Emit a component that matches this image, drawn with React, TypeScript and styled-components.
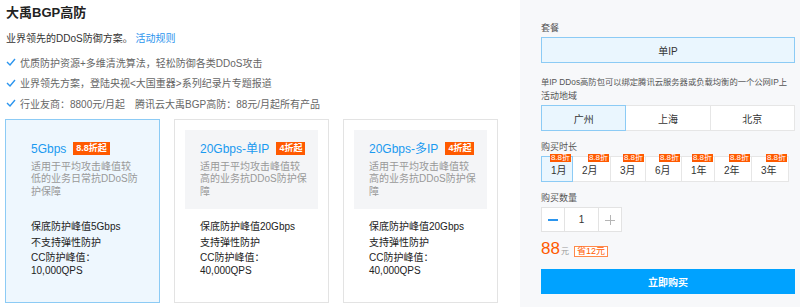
import React, { useState } from 'react';
import styled, { createGlobalStyle } from 'styled-components';

const GlobalStyle = createGlobalStyle`
  body {
    margin: 0;
    font-family: "Liberation Sans", "Noto Sans CJK SC", sans-serif;
    color: #333;
    background: #fff;
  }
  * { box-sizing: border-box; }
`;

interface Plan {
  title: string;
  tag: string;
  desc: string;
  features: string[];
  cc: string;
}

const plans: Plan[] = [
  {
    title: '5Gbps',
    tag: '8.8折起',
    desc: '适用于平均攻击峰值较低的业务日常抗DDoS防护保障',
    features: ['保底防护峰值5Gbps', '不支持弹性防护'],
    cc: '10,000QPS',
  },
  {
    title: '20Gbps-单IP',
    tag: '4折起',
    desc: '适用于平均攻击峰值较高的业务抗DDoS防护保障',
    features: ['保底防护峰值20Gbps', '支持弹性防护'],
    cc: '40,000QPS',
  },
  {
    title: '20Gbps-多IP',
    tag: '4折起',
    desc: '适用于平均攻击峰值较高的业务抗DDoS防护保障',
    features: ['保底防护峰值20Gbps', '支持弹性防护'],
    cc: '40,000QPS',
  },
];

const bullets = [
  '优质防护资源+多维清洗算法，轻松防御各类DDoS攻击',
  '业界领先方案，登陆央视<大国重器>系列纪录片专题报道',
  '行业友商：8800元/月起　腾讯云大禹BGP高防：88元/月起所有产品',
];

const regions = ['广州', '上海', '北京'];
const durations = [
  { label: '1月', width: 32 },
  { label: '2月', width: 39 },
  { label: '3月', width: 36 },
  { label: '6月', width: 37 },
  { label: '1年', width: 34 },
  { label: '2年', width: 38 },
  { label: '3年', width: 38 },
];

function CheckIcon() {
  return (
    <svg width="10" height="8" viewBox="0 0 10 8">
      <polyline points="1,4 4,7 9,1" fill="none" stroke="#2b95ee" strokeWidth="1.4" />
    </svg>
  );
}

function App(): JSX.Element {
  const [plan, setPlan] = useState(0);
  const [region, setRegion] = useState(0);
  const [duration, setDuration] = useState(0);
  const [count, setCount] = useState(1);

  return (
    <Page>
      <GlobalStyle />
      <Main>
        <Title>大禹BGP高防</Title>
        <Subtitle>
          业界领先的DDoS防御方案。 <RuleLink>活动规则</RuleLink>
        </Subtitle>
        <BulletList>
          {bullets.map((b) => (
            <Bullet key={b}>
              <CheckIcon />
              <span>{b}</span>
            </Bullet>
          ))}
        </BulletList>
        <CardRow>
          {plans.map((p, i) => (
            <Card key={p.title} $active={plan === i} onClick={() => setPlan(i)}>
              <CardHead $active={plan === i}>
                <CardTitle>
                  {p.title}
                  <Tag>{p.tag}</Tag>
                </CardTitle>
                <CardDesc>{p.desc}</CardDesc>
              </CardHead>
              <Features>
                {p.features.map((f) => (
                  <Feature key={f}>{f}</Feature>
                ))}
                <CcBlock>
                  CC防护峰值：
                  <br />
                  {p.cc}
                </CcBlock>
              </Features>
            </Card>
          ))}
        </CardRow>
      </Main>

      <Side>
        <Label>套餐</Label>
        <WideOption $active>单IP</WideOption>
        <SideNote>单IP DDos高防包可以绑定腾讯云服务器或负载均衡的一个公网IP上</SideNote>
        <Label $gap={1}>活动地域</Label>
        <OptionRow>
          {regions.map((r, i) => (
            <RegionOption key={r} $active={region === i} onClick={() => setRegion(i)}>
              {r}
            </RegionOption>
          ))}
        </OptionRow>
        <Label $gap={9}>购买时长</Label>
        <DurationRow>
          {durations.map((d, i) => (
            <DurationOption
              key={d.label}
              $active={duration === i}
              style={{ width: d.width }}
              onClick={() => setDuration(i)}
            >
              {d.label}
              <MiniTag>8.8折</MiniTag>
            </DurationOption>
          ))}
        </DurationRow>
        <Label $gap={9}>购买数量</Label>
        <Stepper>
          <StepButton aria-label="减少" onClick={() => setCount(Math.max(1, count - 1))}>
            <MinusBar />
          </StepButton>
          <StepValue>{count}</StepValue>
          <StepButton aria-label="增加" onClick={() => setCount(count + 1)}>
            <PlusMark />
          </StepButton>
        </Stepper>
        <PriceRow>
          <Price>88</Price>
          <Unit>元</Unit>
          <Saving>省12元</Saving>
        </PriceRow>
        <BuyButton>立即购买</BuyButton>
      </Side>
    </Page>
  );
}

export default App;

const Page = styled.div`
  display: flex;
  width: 800px;
  height: 307px;
  overflow: hidden;
`;

const Main = styled.main`
  width: 520px;
  padding: 3px 0 0 6px;
`;

const Title = styled.h1`
  margin: 0;
  font-size: 13px;
  line-height: 20px;
  font-weight: 700;
  color: #222;
`;

const Subtitle = styled.p`
  margin: 7px 0 0;
  font-size: 10px;
  line-height: 18px;
  color: #333;
`;

const RuleLink = styled.a`
  color: #2b95ee;
  cursor: pointer;
`;

const BulletList = styled.ul`
  list-style: none;
  margin: 4px 0 0;
  padding: 0;
`;

const Bullet = styled.li`
  display: flex;
  align-items: center;
  gap: 4px;
  height: 20.5px;
  font-size: 10px;
  color: #666;
`;

const CardRow = styled.div`
  display: flex;
  gap: 14px;
  margin: 5px 0 0 -1px;
`;

const Card = styled.div<{ $active: boolean }>`
  width: 155px;
  height: 184px;
  padding: 10px;
  border: 1px solid ${(p) => (p.$active ? '#8ccbf5' : '#e3e3e3')};
  background: ${(p) => (p.$active ? '#eef7fe' : '#fff')};
  cursor: pointer;
`;

const CardHead = styled.div<{ $active: boolean }>`
  height: 79px;
  padding: 11px 10px 0 15px;
  background: ${(p) => (p.$active ? 'transparent' : '#f4f5f7')};
`;

const CardTitle = styled.div`
  display: flex;
  align-items: center;
  gap: 7px;
  font-size: 12px;
  line-height: 16px;
  color: #1a9af0;
  white-space: nowrap;
`;

const Tag = styled.span`
  display: inline-block;
  padding: 0 3px;
  height: 13px;
  line-height: 13px;
  font-size: 9px;
  font-weight: 700;
  color: #fff;
  background: #ff5a00;
`;

const CardDesc = styled.p`
  margin: 4px 0 0;
  font-size: 10px;
  line-height: 12.7px;
  color: #999;
`;

const Features = styled.div`
  padding: 10px 0 0 15px;
  font-size: 10px;
  color: #222;
`;

const Feature = styled.div`
  line-height: 16px;
`;

const CcBlock = styled.div`
  line-height: 13px;
`;

const Side = styled.aside`
  width: 280px;
  padding: 21px 5px 0 21px;
  background: #f7f8fa;
`;

const Label = styled.div<{ $gap?: number }>`
  margin-top: ${(p) => p.$gap ?? 0}px;
  margin-bottom: 2px;
  font-size: 9px;
  line-height: 14px;
  color: #555;
`;

const optionBase = `
  display: flex;
  align-items: center;
  height: 26px;
  font-size: 10px;
  color: #333;
  cursor: pointer;
`;

const WideOption = styled.div<{ $active: boolean }>`
  ${optionBase}
  justify-content: center;
  border: 1px solid #8ccbf5;
  background: #eaf6fe;
`;

const SideNote = styled.p`
  margin: 13px 0 0;
  font-size: 8.3px;
  line-height: 12px;
  color: #555;
  white-space: nowrap;
`;

const OptionRow = styled.div`
  display: flex;
`;

const RegionOption = styled.div<{ $active: boolean }>`
  ${optionBase}
  flex: 1;
  justify-content: center;
  position: relative;
  border: 1px solid ${(p) => (p.$active ? '#8ccbf5' : '#e6e6e6')};
  background: ${(p) => (p.$active ? '#eaf6fe' : '#fff')};
  z-index: ${(p) => (p.$active ? 1 : 0)};
  & + & {
    margin-left: -1px;
  }
`;

const DurationRow = styled.div`
  display: flex;
  margin-top: 1px;
`;

const DurationOption = styled.div<{ $active: boolean }>`
  ${optionBase}
  position: relative;
  padding-left: 9px;
  border: 1px solid ${(p) => (p.$active ? '#8ccbf5' : '#e6e6e6')};
  background: ${(p) => (p.$active ? '#eaf6fe' : '#fff')};
  z-index: ${(p) => (p.$active ? 1 : 0)};
  & + & {
    margin-left: -1px;
  }
`;

const MiniTag = styled.span`
  position: absolute;
  top: -3px;
  right: 1px;
  padding: 0 1px;
  height: 8px;
  line-height: 8px;
  font-size: 8px;
  color: #fff;
  background: #ff5a00;
`;

const Stepper = styled.div`
  display: flex;
  height: 25px;
`;

const StepButton = styled.button`
  position: relative;
  width: 24px;
  height: 25px;
  padding: 0;
  border: 1px solid #e3e3e3;
  background: #fff;
  cursor: pointer;
`;

const MinusBar = styled.span`
  position: absolute;
  left: 6px;
  top: 11px;
  width: 10px;
  height: 1.5px;
  background: #2b95ee;
`;

const PlusMark = styled.span`
  position: absolute;
  left: 6px;
  top: 7px;
  width: 10px;
  height: 10px;
  &::before,
  &::after {
    content: '';
    position: absolute;
    background: #b5b5b5;
  }
  &::before {
    left: 0;
    top: 4.5px;
    width: 10px;
    height: 1px;
  }
  &::after {
    left: 4.5px;
    top: 0;
    width: 1px;
    height: 10px;
  }
`;

const StepValue = styled.div`
  display: flex;
  align-items: center;
  justify-content: center;
  width: 35px;
  margin: 0 -1px;
  border: 1px solid #e3e3e3;
  background: #fff;
  font-size: 10px;
  color: #333;
`;

const PriceRow = styled.div`
  display: flex;
  align-items: baseline;
  height: 20px;
  margin-top: 7px;
`;

const Price = styled.span`
  font-size: 17px;
  line-height: 20px;
  color: #ff5a00;
`;

const Unit = styled.span`
  margin-left: 1px;
  font-size: 8px;
  color: #999;
`;

const Saving = styled.span`
  margin-left: 5px;
  padding: 0 2px;
  height: 11px;
  line-height: 9px;
  font-size: 9px;
  color: #ff5a00;
  border: 1px solid #ff8a4a;
  background: #fff;
`;

const BuyButton = styled.button`
  display: block;
  width: 100%;
  height: 25px;
  margin-top: 10px;
  border: none;
  background: #00a2ff;
  font-family: inherit;
  font-size: 10px;
  font-weight: 700;
  color: #fff;
  cursor: pointer;
`;
